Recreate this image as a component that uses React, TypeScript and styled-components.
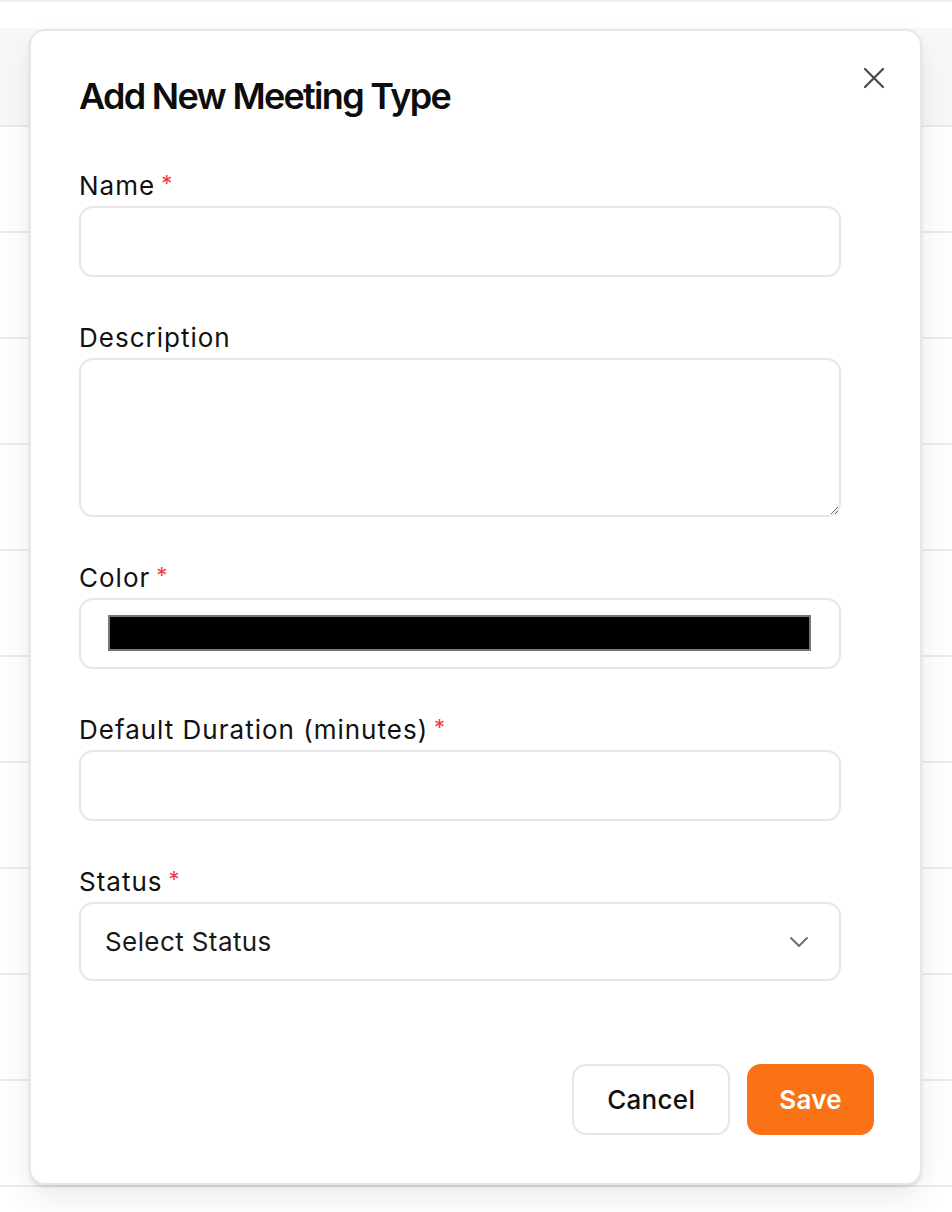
import * as React from "react";
import styled, { createGlobalStyle } from "styled-components";

const GlobalStyle = createGlobalStyle`
  html, body {
    margin: 0;
    padding: 0;
    background: #ffffff;
  }
  body {
    font-family: Inter, "Noto Sans", "Liberation Sans", sans-serif;
    color: #111111;
  }
  * {
    box-sizing: border-box;
  }
`;

const Page = styled.div`
  position: relative;
  width: 952px;
  height: 1212px;
  overflow: hidden;
  border-top: 2px solid #f1f2f4;
`;

const TableHead = styled.div`
  margin-top: 26px;
  height: 99px;
  background: #f7f8fa;
  border-bottom: 2px solid #e9eaec;
`;

const TableRow = styled.div`
  height: 106px;
  border-bottom: 2px solid #ececee;
`;

const Modal = styled.div`
  position: absolute;
  left: 29px;
  top: 27px;
  width: 893px;
  height: 1156px;
  background: #ffffff;
  border: 2px solid #e7e7e9;
  border-radius: 16px;
  box-shadow: 0 2px 3px rgba(0, 0, 0, 0.1), 0 14px 34px rgba(0, 0, 0, 0.08);
  padding: 45px 46px 48px 48px;
  display: flex;
  flex-direction: column;
`;

const CloseButton = styled.button`
  position: absolute;
  top: 35px;
  right: 34px;
  width: 24px;
  height: 24px;
  padding: 0;
  border: none;
  background: transparent;
  display: flex;
  align-items: center;
  justify-content: center;
  cursor: pointer;
`;

const Title = styled.h2`
  margin: 0;
  font-size: 36px;
  line-height: 40px;
  font-weight: 600;
  letter-spacing: -1.7px;
  color: #0d0d0d;
`;

const Form = styled.form`
  width: 762px;
  margin-top: 55px;
  display: flex;
  flex-direction: column;
  gap: 46px;
`;

const Field = styled.div`
  display: flex;
  flex-direction: column;
  gap: 5px;
`;

const Label = styled.label`
  display: block;
  height: 30px;
  font-size: 26px;
  line-height: 30px;
  font-weight: 400;
  letter-spacing: 1px;
  color: #111111;
`;

const Required = styled.span`
  position: relative;
  top: -4px;
  color: #ef3b45;
  font-size: 22px;
  margin-left: 6px;
`;

const TextInput = styled.input`
  width: 100%;
  height: 71px;
  border: 2px solid #e6e6e8;
  border-radius: 14px;
  background: #ffffff;
  padding: 0 24px;
  font-size: 24px;
  font-family: inherit;
  outline: none;
`;

const TextArea = styled.textarea`
  width: 100%;
  height: 159px;
  border: 2px solid #e6e6e8;
  border-radius: 14px;
  background: #ffffff;
  padding: 16px 24px;
  font-size: 24px;
  font-family: inherit;
  outline: none;
  display: block;
`;

const ColorBox = styled.div`
  height: 71px;
  border: 2px solid #e6e6e8;
  border-radius: 14px;
  padding: 15px 28px 16px 27px;
  display: flex;
`;

const ColorSwatch = styled.div<{ swatch: string }>`
  flex: 1;
  background: ${({ swatch }) => swatch};
  border: 2px solid #777777;
`;

const SelectBox = styled.div`
  position: relative;
  height: 79px;
  border: 2px solid #e6e6e8;
  border-radius: 14px;
  padding: 0 30px 0 24px;
  display: flex;
  align-items: center;
  justify-content: space-between;
  font-size: 26px;
  letter-spacing: 0.4px;
  color: #1a1a1a;
`;

const Actions = styled.div`
  margin-top: auto;
  display: flex;
  justify-content: flex-end;
  gap: 17px;
`;

const Button = styled.button<{ primary?: boolean }>`
  height: 71px;
  padding: 0 ${({ primary }) => (primary ? 30 : 33)}px;
  border-radius: 14px;
  font-family: inherit;
  font-size: 26px;
  font-weight: ${({ primary }) => (primary ? 600 : 500)};
  letter-spacing: 0.3px;
  cursor: pointer;
  border: 2px solid ${({ primary }) => (primary ? "#f97316" : "#e6e6e8")};
  background: ${({ primary }) => (primary ? "#f97316" : "#ffffff")};
  color: ${({ primary }) => (primary ? "#ffffff" : "#111111")};
`;

export default function App() {
  const rows = Array.from({ length: 10 });
  return (
    <>
      <GlobalStyle />
      <Page>
        <TableHead />
        {rows.map((_, i) => (
          <TableRow key={i} />
        ))}
        <Modal>
          <CloseButton aria-label="Close">
            <svg width="22" height="22" viewBox="0 0 22 22" fill="none">
              <path
                d="M2 2L20 20M20 2L2 20"
                stroke="#4a4a4a"
                strokeWidth="2.2"
                strokeLinecap="round"
              />
            </svg>
          </CloseButton>
          <Title>Add New Meeting Type</Title>
          <Form>
            <Field>
              <Label>
                Name<Required>*</Required>
              </Label>
              <TextInput type="text" />
            </Field>
            <Field>
              <Label>Description</Label>
              <TextArea />
            </Field>
            <Field>
              <Label>
                Color<Required>*</Required>
              </Label>
              <ColorBox>
                <ColorSwatch swatch="#000000" />
              </ColorBox>
            </Field>
            <Field>
              <Label>
                Default Duration (minutes)<Required>*</Required>
              </Label>
              <TextInput type="text" />
            </Field>
            <Field>
              <Label>
                Status<Required>*</Required>
              </Label>
              <SelectBox>
                <span>Select Status</span>
                <svg width="20" height="12" viewBox="0 0 20 12" fill="none">
                  <path
                    d="M2 2L10 10L18 2"
                    stroke="#707070"
                    strokeWidth="2"
                    strokeLinecap="round"
                    strokeLinejoin="round"
                  />
                </svg>
              </SelectBox>
            </Field>
          </Form>
          <Actions>
            <Button type="button">Cancel</Button>
            <Button type="button" primary>
              Save
            </Button>
          </Actions>
        </Modal>
      </Page>
    </>
  );
}
